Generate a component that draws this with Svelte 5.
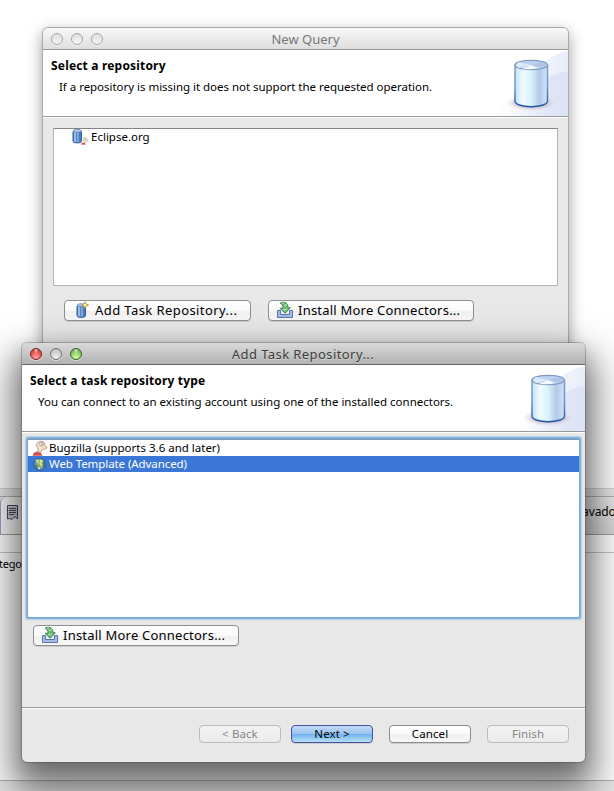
<script>
  const actions = [
    { label: '< Back', kind: 'disabled' },
    { label: 'Next >', kind: 'primary' },
    { label: 'Cancel', kind: '' },
    { label: 'Finish', kind: 'disabled' }
  ];
</script>

{#snippet banner(id)}
  <svg class="banner" width="80" height="66" viewBox="0 0 80 66">
    <defs>
      <linearGradient id="{id}-wash" x1="0" x2="1"><stop offset="0" stop-color="#fff" /><stop offset=".5" stop-color="#f6f8fd" /><stop offset="1" stop-color="#e8edf9" /></linearGradient>
      <linearGradient id="{id}-inner" x1="0" x2="1"><stop offset="0" stop-color="#eef1fb" stop-opacity="0" /><stop offset=".7" stop-color="#dfe6f6" /><stop offset="1" stop-color="#dce3f5" /></linearGradient>
      <linearGradient id="{id}-body" x1="0" x2="1"><stop offset="0" stop-color="#c3e2f5" /><stop offset=".25" stop-color="#effbfe" /><stop offset=".5" stop-color="#d8f3fb" /><stop offset=".75" stop-color="#b3c9e6" /><stop offset="1" stop-color="#d4e2fb" /></linearGradient>
      <linearGradient id="{id}-edge" x1="0" y1="0" x2="0" y2="1"><stop offset="0" stop-color="#7f9fc4" /><stop offset=".5" stop-color="#6d96cd" /><stop offset="1" stop-color="#2456a8" /></linearGradient>
      <radialGradient id="{id}-shade"><stop offset=".5" stop-color="#b7a2b4" stop-opacity=".75" /><stop offset="1" stop-color="#d9cfe0" stop-opacity="0" /></radialGradient>
    </defs>
    <path d="M2 66C30 50 46 6 80 1V66Z" fill="url(#{id}-wash)" />
    <path d="M58 28Q68 23 80 21V66H15Q46 56 58 28Z" fill="url(#{id}-inner)" />
    <ellipse cx="43" cy="53" rx="25" ry="8" fill="url(#{id}-shade)" />
    <path d="M27 15V51C27 58.5 59.5 58.5 59.5 51V15Z" fill="url(#{id}-body)" stroke="url(#{id}-edge)" stroke-width="1.5" />
    <ellipse cx="43.2" cy="15" rx="16.2" ry="4.7" fill="#bdd0f1" stroke="#809fc5" stroke-width="1.3" />
    <path d="M43 15L31 12Q26 15 31 18Z" fill="#dbeaf9" />
    <path d="M43 15L34 19Q43 20 50 18Z" fill="#f4fbfd" />
    <path d="M43 15L55 18Q60 15 55 12Z" fill="#a9bddf" opacity=".6" />
  </svg>
{/snippet}

{#snippet cylinder()}
  <rect x="1" y="2.2" width="8.5" height="12.6" rx="2.2" fill="#4d7cbe" stroke="#315f9f" />
  <path d="M3 4V14" stroke="#a9c8ed" stroke-width="1.7" />
  <path d="M5.8 4V14" stroke="#82abe0" stroke-width="2" />
  <ellipse cx="5.2" cy="2.7" rx="3.8" ry="1.5" fill="#b9d1f1" stroke="#5178b1" stroke-width=".7" />
{/snippet}

{#snippet install()}
  <svg width="18" height="18" viewBox="0 0 18 18">
    <path d="M1.5 9.5H4.5V13.5H13.5V9.5H16.5V16.5H1.5Z" fill="#a4bce4" stroke="#5977af" />
    <path d="M4.2 2.2C7 .3 12 1 12 6.8H14.3L9.2 12.2L4 7.3H7C7.3 4.4 6 3 4.2 2.2Z" fill="#72bd78" stroke="#328459" stroke-width="1" />
    <path d="M6 2.6L8 1.8M8 4.7L11 3.5M6.7 8.5L10.5 9" stroke="#c1e6a9" stroke-width="1" />
  </svg>
{/snippet}

{#snippet head()}
  <path d="M.5 15.5Q1 12 4.5 12Q9 12 9.5 15.5Z" fill="#d94f4f" stroke="#b94a48" stroke-width=".5" />
  <path d="M4.5 12Q7 10 4.5 7Q3 4 5 2.4Q8 .4 11 1.8Q12.4 3 12.2 5L14.4 6.8Q14.9 8.8 12 9.2Q8.6 9.2 8.6 12.2Z" fill="#f4dfc2" stroke="#a08c76" stroke-width=".7" />
  <circle cx="9" cy="4.2" r="1.9" fill="#fffdf6" stroke="#7f786e" stroke-width=".6" />
  <circle cx="9.5" cy="4.3" r=".6" fill="#333" />
{/snippet}

<main>
  <div class="workspace">
    <div class="sash"></div>
    <div class="tabs">
      <div class="tab">
        <svg width="13" height="17" viewBox="0 0 13 17">
          <path d="M1.5 1.5H11.5V15L9 12.5L6 15.5L3.5 14.5L1.5 15Z" fill="#c8c8dc" stroke="#4a4a58" />
          <path d="M3 4.5H10M3 6.5H10M3 8.5H10M3 10.5H8" stroke="#4a4a58" />
        </svg>
      </div>
      <span class="javadoc">avado</span>
    </div>
    <div class="strip"></div>
    <div class="columns"><span class="category">tego</span></div>
    <div class="status"></div>
  </div>

  <section class="window query">
    <div class="titlebar">
      <i></i><i></i><i></i>
      <span class="title">New Query</span>
    </div>
    <header>
      <h1>Select a repository</h1>
      <p>If a repository is missing it does not support the requested operation.</p>
      {@render banner('q')}
    </header>
    <div class="content">
      <div class="list">
        <div class="row">
          <svg width="17" height="17" viewBox="0 0 17 17">
            {@render cylinder()}
            <g transform="translate(9 9) scale(.48)">{@render head()}</g>
          </svg>
          <span>Eclipse.org</span>
        </div>
      </div>
      <div class="buttons">
        <button class="large add">
          <svg width="18" height="18" viewBox="0 0 18 18">
            <g transform="translate(4 1.5)">{@render cylinder()}</g>
            <path d="M13 .8L14.2 3L16.5 4L14.2 5L13 7.5L11.8 5L9.5 4L11.8 3Z" fill="#fff4b3" stroke="#b38b35" stroke-width=".9" />
          </svg>
          <span>Add Task Repository...</span>
        </button>
        <button class="large install">{@render install()}<span>Install More Connectors...</span></button>
      </div>
    </div>
  </section>

  <section class="window add-repo">
    <div class="titlebar">
      <i class="red"></i><i></i><i class="green"></i>
      <span class="title">Add Task Repository...</span>
    </div>
    <header>
      <h1>Select a task repository type</h1>
      <p>You can connect to an existing account using one of the installed connectors.</p>
      {@render banner('a')}
    </header>
    <div class="content">
      <div class="focus-list">
        <div class="row first">
          <svg width="16" height="16" viewBox="0 0 15 16">{@render head()}</svg>
          <span>Bugzilla (supports 3.6 and later)</span>
        </div>
        <div class="row selected">
          <svg width="16" height="17" viewBox="0 0 16 17">
            <circle cx="7.5" cy="8.5" r="5.9" fill="#5b90bd" stroke="#315c83" />
            <path d="M3 5Q7 1 12 5L10.5 7L12.5 9L9 13L7.5 10L4 9L5.5 6Z" fill="#91b45c" />
            <path d="M4 4L6 5L5 7M8 4L10 5L8 7L10 10M6 11L8 13" stroke="#f1eec0" stroke-width="1.2" fill="none" />
            <path d="M2.5 9Q5 10 5 13M12 5Q13 9 11 11" stroke="#347553" stroke-width="1.2" fill="none" />
          </svg>
          <span>Web Template (Advanced)</span>
        </div>
      </div>
      <button class="large install lower">{@render install()}<span>Install More Connectors...</span></button>
    </div>
    <footer>
      {#each actions as action}
        <button class="small {action.kind}">{action.label}</button>
      {/each}
    </footer>
  </section>
</main>

<style>
  :global(body) { margin: 0; background: #fff; }
  * { box-sizing: border-box; }
  main { position: relative; width: 614px; height: 791px; overflow: hidden; background: #fff; color: #000; font: 11.5px/16px 'Noto Sans', 'Open Sans', sans-serif; white-space: nowrap; }
  svg { display: block; flex: none; }

  .workspace { display: flex; flex-direction: column; height: 100%; padding-top: 488px; }
  .sash { flex: none; height: 8px; background: #e8e8e8; border-top: 1px solid #d2d2d2; }
  .tabs { flex: none; display: flex; justify-content: space-between; height: 39px; border-top: 1px solid #b0b0b0; border-bottom: 1px solid #a2a2a2; background: linear-gradient(#e9e9e9, #d6d6d6); }
  .tab { width: 40px; padding: 7px 0 0 5px; border: solid #9aa0c8; border-width: 0 0 0 1px; border-radius: 6px 0 0; background: #f8f8f8; }
  .javadoc { width: 32px; padding-top: 7px; font-size: 12px; letter-spacing: -.1px; }
  .strip { flex: none; height: 18px; border-bottom: 1px solid #c5c5c5; }
  .columns { flex: 1; display: flex; }
  .category { margin: 3px 0 0 -1px; font-size: 11px; letter-spacing: -.2px; }
  .status { flex: none; height: 11px; background: #e8e8e8; border-top: 1px solid #b5b5b5; }

  .window { position: absolute; display: flex; flex-direction: column; border-radius: 5px; background: #e8e8e8; }
  .query { left: 43px; top: 28px; width: 525px; height: 420px; box-shadow: 0 0 0 1px #aaa, 0 5px 15px 1px rgba(0, 0, 0, .38); }
  .add-repo { left: 22px; top: 343px; width: 563px; height: 419px; box-shadow: 0 0 0 1px rgba(60, 60, 60, .3), 0 22px 38px 10px rgba(0, 0, 0, .5), 0 8px 20px rgba(0, 0, 0, .2); }
  .titlebar { flex: none; display: flex; align-items: center; gap: 8px; height: 22px; padding: 1px 0 0 8px; border-bottom: 1px solid #999; border-radius: 5px 5px 0 0; background: linear-gradient(#f8f8f8, #dedede); position: relative; }
  .add-repo .titlebar { border-color: #666; background: linear-gradient(#dadada, #b2b2b2); }
  .titlebar i { width: 12px; height: 12px; border: 1px solid #a5a5a5; border-radius: 50%; background: linear-gradient(#dedede, #f6f6f6); box-shadow: 0 1px 0 #fff8; }
  .add-repo i { border-color: #777; background: radial-gradient(circle at 50% 85%, #eee, #ccc 65%, #aaa); }
  .add-repo i.red { border-color: #7f211e; background: radial-gradient(ellipse at 50% 12%, #fffb, transparent 30%), radial-gradient(circle at 50% 85%, #ffa59e, #e2514b 60%, #a92a26); }
  .add-repo i.green { border-color: #36641f; background: radial-gradient(ellipse at 50% 12%, #fffb, transparent 30%), radial-gradient(circle at 50% 85%, #d3f7aa, #88c765 60%, #528b35); }
  .title { position: absolute; inset: 2px 0 0; text-align: center; font-size: 13px; line-height: 19px; color: #777; }
  .add-repo .title { color: #3d3d3d; text-shadow: 0 1px 0 #fff5; letter-spacing: .42px; left: -1px; }

  header { position: relative; flex: none; height: 67px; padding: 8px 0 0 8px; border-bottom: 1px solid #999; background: #fff; }
  h1 { margin: 0; font-size: 12px; line-height: 16px; font-weight: 700; letter-spacing: .18px; }
  p { margin: 5px 0 0 8px; }
  .query p { letter-spacing: -.03px; }
  .banner { position: absolute; right: 0; top: 0; }
  .content { flex: 1; border-top: 1px solid #fff; }
  .query .content { padding: 10px 10px 0 10px; }
  .list { height: 158px; padding-left: 18px; border: 1px solid #b6b6b6; border-top-color: #858585; background: #fff; }
  .row { display: flex; align-items: center; gap: 3px; height: 17px; }
  .list .row { gap: 2px; height: 15px; }
  .buttons { display: flex; gap: 17px; padding: 14px 0 0 11px; }
  button { margin: 0; padding: 0; font: inherit; color: #000; border: 1px solid #8e8e8e; border-radius: 4px; background: linear-gradient(#fff, #fafafa 50%, #f0f0f0 51%, #f7f7f7); box-shadow: 0 1px 0 #ccc; }
  .large { display: flex; align-items: center; gap: 5px; height: 21px; padding: 0 0 1px 6px; font-size: 13px; }
  .install { width: 206px; letter-spacing: .22px; padding-left: 7px; gap: 4px; }
  .add { width: 187px; padding-left: 7px; letter-spacing: .42px; gap: 5px; }

  .add-repo .content { padding: 6px 6px 0; }
  .focus-list { height: 178px; border-top: 1px solid #7c9bb8; border-radius: 1px; box-shadow: 0 0 0 1px #76a8d6, 0 0 0 2px #8ab5dd, 0 0 1px 3px #b5cee5; background: #fff; }
  .focus-list .row { padding-left: 4px; gap: 1px; height: 16px; }
  .focus-list .row.first { padding-bottom: 1px; }
  .focus-list .row.selected { letter-spacing: -.08px; }
  .selected { color: #fff; background: #3b77d6; }
  .lower { margin: 8px 0 0 5px; }
  footer { flex: none; display: flex; height: 55px; padding: 17px 16px 0 0; justify-content: flex-end; gap: 16px; border-top: 1px solid #999; box-shadow: inset 0 1px 0 #fff; }
  .small { width: 82px; height: 18px; padding-bottom: 1px; line-height: 15px; letter-spacing: .1px; }
  .small.primary { margin-left: -6px; border-color: #4850a0; background: linear-gradient(#c2daf4, #9bc5f0 48%, #6fafee 50%, #b6e1fd); }
  .small.disabled { color: #858585; border-color: #bcbcbc; background: linear-gradient(#f3f3f3, #ebebeb); box-shadow: none; }
</style>
